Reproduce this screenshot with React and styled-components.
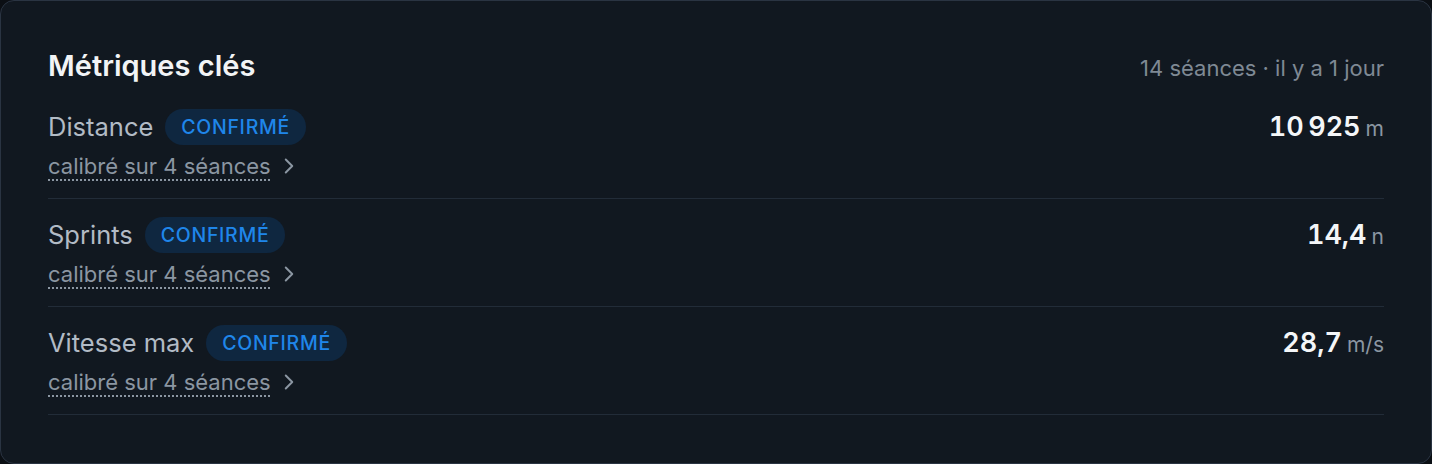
import React from 'react';
import styled, { createGlobalStyle } from 'styled-components';
import { ChevronRight } from 'lucide-react';

const GlobalStyle = createGlobalStyle`
  html, body {
    margin: 0;
    padding: 0;
    background: #0b0f14;
  }
  body {
    font-family: Inter, 'Noto Sans', sans-serif;
    -webkit-font-smoothing: antialiased;
  }
`;

const Card = styled.section`
  box-sizing: border-box;
  width: 1432px;
  height: 464px;
  padding: 47px 47px 0;
  background: #111820;
  border: 1px solid #2a3442;
  border-radius: 14px;
`;

const Header = styled.header`
  display: flex;
  align-items: center;
  justify-content: space-between;
  height: 36px;
  margin-bottom: 7px;
`;

const Title = styled.h2`
  margin: 0;
  font-size: 29px;
  font-weight: 600;
  color: #f2f4f6;
  line-height: 36px;
`;

const Meta = styled.span`
  font-size: 22px;
  color: #7f8994;
  padding-top: 4px;
`;

const Row = styled.div`
  display: flex;
  justify-content: space-between;
  align-items: flex-start;
  padding: 18px 0 18px;
  border-bottom: 1px solid #222c38;
`;

const Left = styled.div`
  display: flex;
  flex-direction: column;
  gap: 7px;
`;

const LabelLine = styled.div`
  display: flex;
  align-items: center;
  gap: 12px;
  height: 36px;
`;

const Label = styled.span`
  font-size: 25.5px;
  color: #b2bbc5;
  line-height: 36px;
`;

const Badge = styled.span`
  display: inline-flex;
  align-items: center;
  height: 36px;
  padding: 0 16px;
  border-radius: 18px;
  background: #0f2740;
  color: #1f86ea;
  font-size: 19.5px;
  font-weight: 500;
  letter-spacing: 0.7px;
  text-transform: uppercase;
`;

const Calib = styled.a`
  display: inline-flex;
  align-items: center;
  gap: 5px;
  height: 28px;
  line-height: 28px;
  color: #8b96a2;
  font-size: 22px;
  text-decoration: none;
  cursor: pointer;
`;

const Dotted = styled.span`
  text-decoration: underline dotted #8b96a2;
  text-decoration-thickness: 2px;
  text-underline-offset: 5px;
`;

const Value = styled.div`
  display: flex;
  align-items: baseline;
  gap: 5px;
  height: 36px;
  line-height: 36px;
`;

const Number = styled.span`
  font-size: 27px;
  font-weight: 600;
  color: #f4f6f8;
  font-variant-numeric: tabular-nums;
`;

const Unit = styled.span`
  font-size: 21px;
  color: #8b96a2;
`;

const metrics = [
  { label: 'Distance', value: '10\u2009925', unit: 'm' },
  { label: 'Sprints', value: '14,4', unit: 'n' },
  { label: 'Vitesse max', value: '28,7', unit: 'm/s' },
];

const App = () => (
  <>
    <GlobalStyle />
    <Card>
      <Header>
        <Title>Métriques clés</Title>
        <Meta>14 séances · il y a 1 jour</Meta>
      </Header>
      {metrics.map((m) => (
        <Row key={m.label}>
          <Left>
            <LabelLine>
              <Label>{m.label}</Label>
              <Badge>Confirmé</Badge>
            </LabelLine>
            <Calib>
              <Dotted>calibré sur 4 séances</Dotted>
              <ChevronRight size={26} strokeWidth={1.8} />
            </Calib>
          </Left>
          <Value>
            <Number>{m.value}</Number>
            <Unit>{m.unit}</Unit>
          </Value>
        </Row>
      ))}
    </Card>
  </>
);

export default App;
